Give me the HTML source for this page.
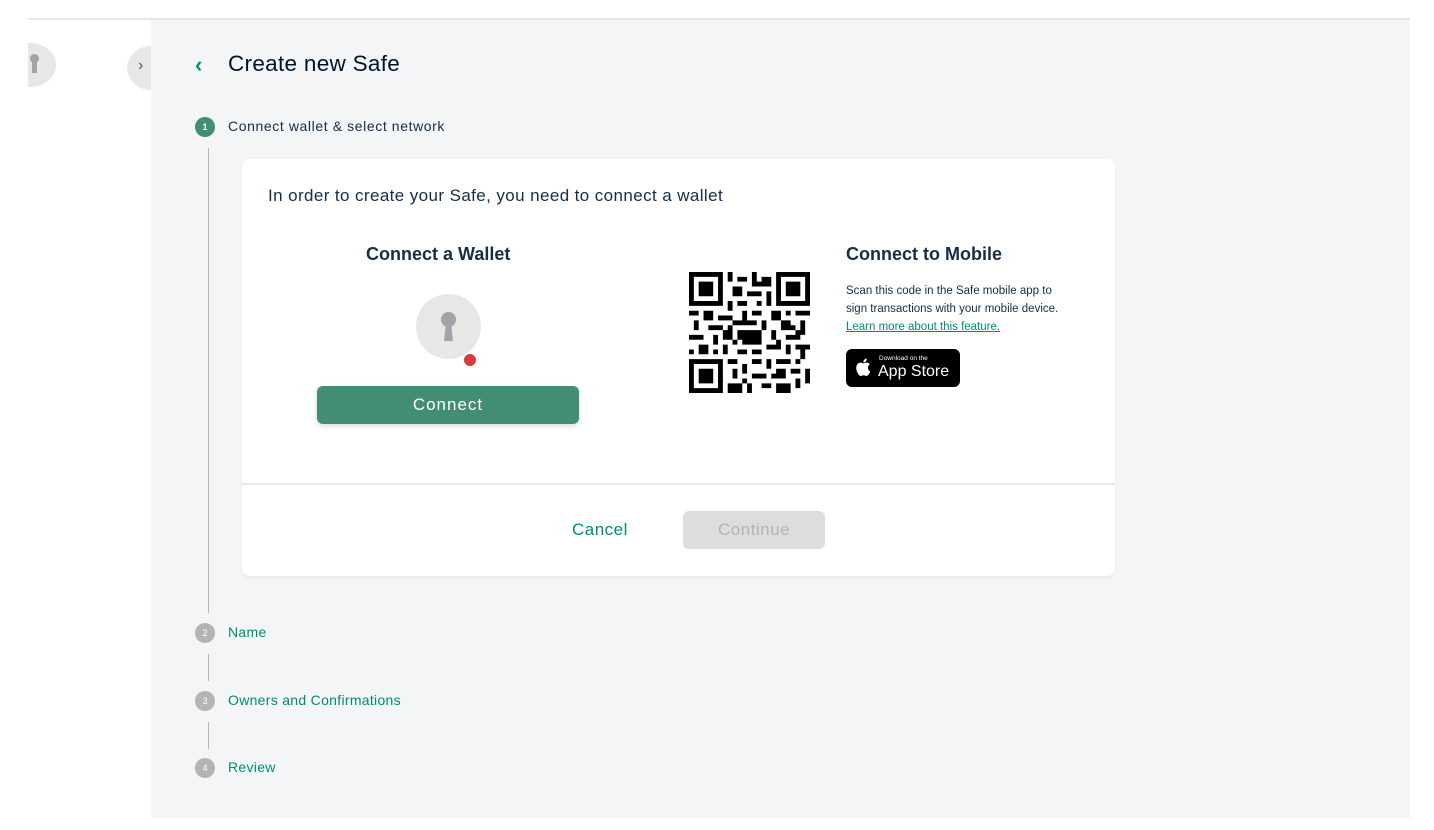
<!DOCTYPE html>
<html><head><style>
*{margin:0;padding:0;box-sizing:border-box}
body{width:1434px;height:830px;background:#fff;font-family:"Liberation Sans",sans-serif;position:relative;overflow:hidden;color:#162d45}
.a{position:absolute}
.main{left:151px;top:20px;width:1259px;height:798px;background:#f4f5f7}
.topline{left:28px;top:18px;width:1382px;height:2px;background:#e8e8e8}
.circ{border-radius:50%}
.step{width:20px;height:20px;border-radius:50%;background:#b2b5b2;color:#fff;font-size:9px;text-align:center;line-height:20px}
.lbl{font-size:14px;color:#008c73;letter-spacing:.3px}
.vl{width:1px;background:#b2b5b2;left:208px}
</style></head><body>
<div class="a topline"></div>
<div class="a circ" style="left:4px;top:43px;width:52px;height:44px;background:#e8e7e6;clip-path:inset(0 0 0 24px)"></div>
<div class="a" style="left:30px;top:54px;width:9px;height:9px;border-radius:50%;background:#a1a3a7"></div>
<div class="a" style="left:32px;top:60px;width:5px;height:13px;background:#a1a3a7"></div>
<div class="a main"></div>
<div class="a circ" style="left:127px;top:46px;width:48px;height:44px;background:#e8e7e6;clip-path:inset(0 24px 0 0)"></div>
<div class="a" style="left:138px;top:57px;font-size:16px;color:#555">›</div>
<div class="a" style="left:195px;top:52px;font-size:22px;color:#008c73;font-weight:bold">‹</div>
<div class="a" style="left:228px;top:51px;font-size:22.5px;color:#001428;letter-spacing:.3px">Create new Safe</div>
<div class="a step" style="left:195px;top:117px;background:#418e74;font-weight:bold">1</div>
<div class="a" style="left:228px;top:118px;font-size:14px;color:#162d45;letter-spacing:.6px">Connect wallet &amp; select network</div>
<div class="a vl" style="top:148px;height:465px"></div>
<div class="a" style="left:242px;top:159px;width:873px;height:417px;background:#fff;border-radius:8px;box-shadow:0 2px 4px rgba(0,0,0,.05)"></div>
<div class="a" style="left:268px;top:186px;font-size:17px;color:#162d45;letter-spacing:.4px">In order to create your Safe, you need to connect a wallet</div>
<div class="a" style="left:366px;top:244px;font-size:18px;font-weight:bold;color:#162d45">Connect a Wallet</div>
<div class="a circ" style="left:416px;top:294px;width:65px;height:65px;background:#e8e7e6"></div>
<div class="a circ" style="left:441px;top:312px;width:15px;height:15px;background:#a1a3a7"></div>
<div class="a" style="left:444px;top:320px;width:9px;height:21px;background:#a1a3a7;clip-path:polygon(25% 0,75% 0,100% 100%,0 100%)"></div>
<div class="a circ" style="left:462px;top:352px;width:16px;height:16px;background:#db3a3d;border:2px solid #fff"></div>
<div class="a" style="left:317px;top:386px;width:262px;height:38px;background:#418e74;border-radius:6px;color:#fff;font-size:17px;text-align:center;line-height:38px;letter-spacing:1px;box-shadow:0 2px 6px rgba(0,0,0,.15)">Connect</div>
<svg class="a" style="left:689px;top:272px" width="121" height="121" viewBox="0 0 25 25">
<rect width="25" height="25" fill="#fff"/>
<g fill="#000">
<path d="M0 0h7v7H0zM18 0h7v7h-7zM0 18h7v7H0z"/>
</g>
<g fill="#fff"><path d="M1 1h5v5H1zM19 1h5v5h-5zM1 19h5v5H1z"/></g>
<g fill="#000"><path d="M2 2h3v3H2zM20 2h3v3h-3zM2 20h3v3H2z"/>
<path d="M8 0h1v2H8zM10 1h2v1h-2zM13 0h1v3h-1zM15 1h2v2h-2zM9 3h2v2H9zM12 4h3v1h-3zM16 4h1v3h-1zM8 6h1v2H8zM10 6h2v1h-2zM14 6h1v1h-1zM0 8h2v1H0zM3 8h2v2H3zM6 9h3v1H6zM11 8h1v2h-1zM13 8h2v1h-2zM17 8h2v2h-2zM20 8h1v1h-1zM22 8h3v1h-3zM1 10h1v2H1zM4 11h3v1H4zM9 10h2v1H9zM19 10h2v2h-2zM23 10h1v3h-1zM0 13h3v1H0zM5 13h1v2H5zM7 12h2v2H7zM17 12h1v2h-1zM20 13h2v1h-2zM2 15h2v2H2zM7 15h1v2H7zM9 14h1v1H9zM16 15h3v1h-3zM20 15h1v2h-1zM22 15h3v1h-3zM8 18h2v1H8zM11 19h1v2h-1zM13 18h2v1h-2zM16 18h1v2h-1zM18 18h3v1h-3zM22 18h1v1h-1zM9 20h1v2H9zM13 21h3v1h-3zM18 20h2v2h-2zM21 20h2v1h-2zM24 20h1v3h-1zM8 23h3v2H8zM12 23h1v2h-1zM15 23h2v1h-2zM18 23h3v2h-3zM22 22h1v2h-1zM10 10h4v1h-4zM10 12h5v2h-5zM11 14h4v1h-4zM8 11h1v1H8zM15 10h1v2h-1zM18 14h1v1h-1zM21 11h1v1h-1zM10 16h2v1h-2zM13 16h2v1h-2zM5 16h1v1H5zM22 12h1v2h-1zM0 16h1v1H0zM14 2h1v1h-1zM11 22h1v1h-1zM23 16h1v2h-1zM17 21h1v1h-1z"/></g>
</svg>
<div class="a" style="left:846px;top:244px;font-size:18px;font-weight:bold;color:#162d45">Connect to Mobile</div>
<div class="a" style="left:846px;top:282px;width:218px;font-size:11.5px;line-height:18px;color:#162d45">Scan this code in the Safe mobile app to sign transactions with your mobile device. <span style="color:#008c73;text-decoration:underline">Learn more about this feature.</span></div>
<div class="a" style="left:846px;top:349px;width:114px;height:38px;background:#000;border-radius:6px;color:#fff">
<svg class="a" style="left:9px;top:8px" width="16" height="20" viewBox="0 0 16 20"><path fill="#fff" d="M13 10.6c0-2.2 1.8-3.2 1.9-3.3-1-1.5-2.6-1.7-3.2-1.7-1.3-.1-2.6.8-3.300.8-.7 0-1.7-.8-2.8-.8C4.100 5.600 2.700 6.500 2 7.800.4 10.600 1.600 14.600 3.100 16.800c.7 1.100 1.600 2.300 2.700 2.200 1.100 0 1.500-.7 2.800-.7 1.300 0 1.700.7 2.800.7 1.200 0 1.900-1.100 2.600-2.100.8-1.200 1.200-2.400 1.200-2.500 0 0-2.200-.9-2.200-3.800zM10.900 4.200c.6-.7 1-1.700.9-2.700-.9 0-1.900.6-2.500 1.300-.6.600-1 1.600-.9 2.600 1 .1 1.900-.5 2.500-1.200z"/></svg>
<div class="a" style="left:33px;top:6px;font-size:6.5px">Download on the</div>
<div class="a" style="left:32px;top:14px;font-size:16px">App Store</div>
</div>
<div class="a" style="left:242px;top:483px;width:873px;height:2px;background:#e8e8e8"></div>
<div class="a" style="left:572px;top:520px;font-size:17px;color:#008c73;letter-spacing:.5px">Cancel</div>
<div class="a" style="left:683px;top:511px;width:142px;height:38px;background:#dddddd;border-radius:6px;color:#b2b5b2;font-size:17px;text-align:center;line-height:38px;letter-spacing:.5px">Continue</div>
<div class="a step" style="left:195px;top:623px">2</div>
<div class="a lbl" style="left:228px;top:624px">Name</div>
<div class="a vl" style="top:654px;height:27px"></div>
<div class="a step" style="left:195px;top:691px">3</div>
<div class="a lbl" style="left:228px;top:692px">Owners and Confirmations</div>
<div class="a vl" style="top:722px;height:27px"></div>
<div class="a step" style="left:195px;top:758px">4</div>
<div class="a lbl" style="left:228px;top:759px">Review</div>
</body></html>
